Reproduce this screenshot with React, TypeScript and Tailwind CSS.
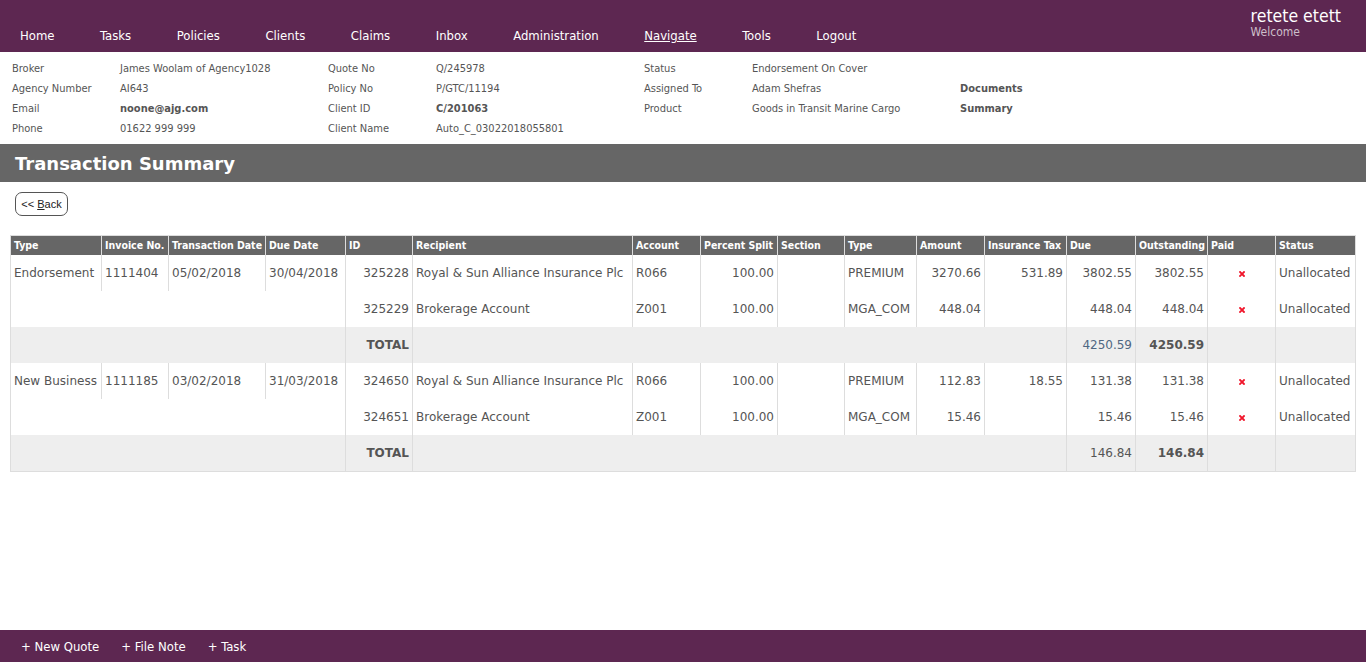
import React from 'react';

const navItems = ['Home', 'Tasks', 'Policies', 'Clients', 'Claims', 'Inbox', 'Administration', 'Navigate', 'Tools', 'Logout'];

const infoRows = [
  ['Broker', 'James Woolam of Agency1028', 'Quote No', 'Q/245978', 'Status', 'Endorsement On Cover', ''],
  ['Agency Number', 'AI643', 'Policy No', 'P/GTC/11194', 'Assigned To', 'Adam Shefras', 'Documents'],
  ['Email', 'noone@ajg.com', 'Client ID', 'C/201063', 'Product', 'Goods in Transit Marine Cargo', 'Summary'],
  ['Phone', '01622 999 999', 'Client Name', 'Auto_C_03022018055801', '', '', ''],
];

const boldValues = ['noone@ajg.com', 'C/201063'];

const columns = [
  { label: 'Type', w: 91 },
  { label: 'Invoice No.', w: 67 },
  { label: 'Transaction Date', w: 97 },
  { label: 'Due Date', w: 80 },
  { label: 'ID', w: 67 },
  { label: 'Recipient', w: 220 },
  { label: 'Account', w: 68 },
  { label: 'Percent Split', w: 77 },
  { label: 'Section', w: 67 },
  { label: 'Type', w: 72 },
  { label: 'Amount', w: 68 },
  { label: 'Insurance Tax', w: 82 },
  { label: 'Due', w: 69 },
  { label: 'Outstanding', w: 72 },
  { label: 'Paid', w: 68 },
  { label: 'Status', w: 79 },
];

interface Line {
  id: string;
  recipient: string;
  account: string;
  split: string;
  type: string;
  amount: string;
  tax: string;
  due: string;
  outstanding: string;
}

interface Group {
  type: string;
  invoice: string;
  txDate: string;
  dueDate: string;
  lines: Line[];
  totalDue: string;
  totalOut: string;
  blueDue?: boolean;
}

const groups: Group[] = [
  {
    type: 'Endorsement',
    invoice: '1111404',
    txDate: '05/02/2018',
    dueDate: '30/04/2018',
    lines: [
      { id: '325228', recipient: 'Royal & Sun Alliance Insurance Plc', account: 'R066', split: '100.00', type: 'PREMIUM', amount: '3270.66', tax: '531.89', due: '3802.55', outstanding: '3802.55' },
      { id: '325229', recipient: 'Brokerage Account', account: 'Z001', split: '100.00', type: 'MGA_COM', amount: '448.04', tax: '', due: '448.04', outstanding: '448.04' },
    ],
    totalDue: '4250.59',
    totalOut: '4250.59',
    blueDue: true,
  },
  {
    type: 'New Business',
    invoice: '1111185',
    txDate: '03/02/2018',
    dueDate: '31/03/2018',
    lines: [
      { id: '324650', recipient: 'Royal & Sun Alliance Insurance Plc', account: 'R066', split: '100.00', type: 'PREMIUM', amount: '112.83', tax: '18.55', due: '131.38', outstanding: '131.38' },
      { id: '324651', recipient: 'Brokerage Account', account: 'Z001', split: '100.00', type: 'MGA_COM', amount: '15.46', tax: '', due: '15.46', outstanding: '15.46' },
    ],
    totalDue: '146.84',
    totalOut: '146.84',
  },
];

const RedCross = () => (
  <svg width="6" height="6" viewBox="0 0 6 6" className="inline-block">
    <path d="M1 1 L5 5 M5 1 L1 5" stroke="#f0162b" strokeWidth="1.8" strokeLinecap="square" />
  </svg>
);

const td = 'h-[36px] px-[3px] border-r border-[#dddddd] align-middle whitespace-nowrap';

const GroupRows: React.FC<{ g: Group }> = ({ g }) => (
  <>
    {g.lines.map((l, i) => (
      <tr key={l.id}>
        {i === 0 ? (
          <>
            <td className={td}>{g.type}</td>
            <td className={td}>{g.invoice}</td>
            <td className={td}>{g.txDate}</td>
            <td className={td}>{g.dueDate}</td>
          </>
        ) : (
          <td colSpan={4} className={td}></td>
        )}
        <td className={`${td} text-right`}>{l.id}</td>
        <td className={td}>{l.recipient}</td>
        <td className={td}>{l.account}</td>
        <td className={`${td} text-right`}>{l.split}</td>
        <td className={td}></td>
        <td className={td}>{l.type}</td>
        <td className={`${td} text-right`}>{l.amount}</td>
        <td className={`${td} text-right`}>{l.tax}</td>
        <td className={`${td} text-right`}>{l.due}</td>
        <td className={`${td} text-right`}>{l.outstanding}</td>
        <td className={`${td} text-center`}>
          <RedCross />
        </td>
        <td className="h-[36px] px-[3px] align-middle whitespace-nowrap">Unallocated</td>
      </tr>
    ))}
    <tr className="bg-[#eeeeee]">
      <td colSpan={4} className={td}></td>
      <td className={`${td} text-right font-bold`}>TOTAL</td>
      <td colSpan={7} className={td}></td>
      <td className={`${td} text-right ${g.blueDue ? 'text-[#4f6782]' : ''}`}>{g.totalDue}</td>
      <td className={`${td} text-right font-bold`}>{g.totalOut}</td>
      <td className={td}></td>
      <td className="h-[36px] px-[3px]"></td>
    </tr>
  </>
);

export default function App() {
  return (
    <div className="min-h-screen flex flex-col bg-white" style={{ fontFamily: '"DejaVu Sans Condensed", "DejaVu Sans", sans-serif' }}>
      <header className="h-[52px] bg-[#5d2751] flex justify-between text-white">
        <nav className="flex gap-[45.5px] pl-[20px] pt-[27px] text-[13px] leading-[18px]">
          {navItems.map((n) => (
            <a key={n} className={n === 'Navigate' ? 'underline' : ''}>
              {n}
            </a>
          ))}
        </nav>
        <div className="pr-[25px] pt-[6px]">
          <div className="text-[17.5px] leading-[20px]">retete etett</div>
          <div className="text-[12px] leading-[12px] text-[#cdbfca]">Welcome</div>
        </div>
      </header>

      <section className="pt-[7px] pb-[5px] px-[12px] text-[11px] text-[#555555]">
        {infoRows.map((r, i) => (
          <div key={i} className="grid grid-cols-[108px_208px_108px_208px_108px_208px_200px] h-[20px] items-center">
            {r.map((c, j) => (
              <div key={j} className={boldValues.includes(c) || j === 6 ? 'font-bold' : ''}>
                {c}
              </div>
            ))}
          </div>
        ))}
      </section>

      <main className="flex-1">
        <div className="h-[38px] bg-[#666666] flex items-center pl-[15px] pt-[1px]">
          <h1 className="text-white font-bold text-[18px]" style={{ fontFamily: '"DejaVu Sans", sans-serif' }}>
            Transaction Summary
          </h1>
        </div>

        <div className="px-[10px]">
          <button
            className="mt-[10px] ml-[5px] h-[24px] w-[53px] rounded-[7px] border border-[#555555] bg-white text-[11px] text-[#222222]"
            style={{ fontFamily: '"Liberation Sans", Arial, sans-serif' }}
          >
            &lt;&lt; <span className="underline">B</span>ack
          </button>

          <table
            className="mt-[19px] table-fixed border-separate border-spacing-0 border border-[#dddddd] text-[12px] text-[#555555] w-[1346px]"
            style={{ fontFamily: '"DejaVu Sans", sans-serif' }}
          >
            <colgroup>
              {columns.map((c, i) => (
                <col key={i} style={{ width: c.w }} />
              ))}
            </colgroup>
            <thead>
              <tr className="bg-[#666666] text-white">
                {columns.map((c, i) => (
                  <th
                    key={i}
                    className={`h-[19px] px-[3px] text-left font-bold text-[10.5px] whitespace-nowrap overflow-hidden ${i < columns.length - 1 ? 'border-r border-[#dddddd]' : ''}`}
                    style={{ fontFamily: '"DejaVu Sans Condensed", "DejaVu Sans", sans-serif' }}
                  >
                    {c.label}
                  </th>
                ))}
              </tr>
            </thead>
            <tbody>
              {groups.map((g) => (
                <GroupRows key={g.invoice} g={g} />
              ))}
            </tbody>
          </table>
        </div>
      </main>

      <footer className="h-[32px] bg-[#5d2751] flex items-center gap-[22px] pl-[21px] pt-[1px] text-white text-[13px]">
        <span>+ New Quote</span>
        <span>+ File Note</span>
        <span>+ Task</span>
      </footer>
    </div>
  );
}
